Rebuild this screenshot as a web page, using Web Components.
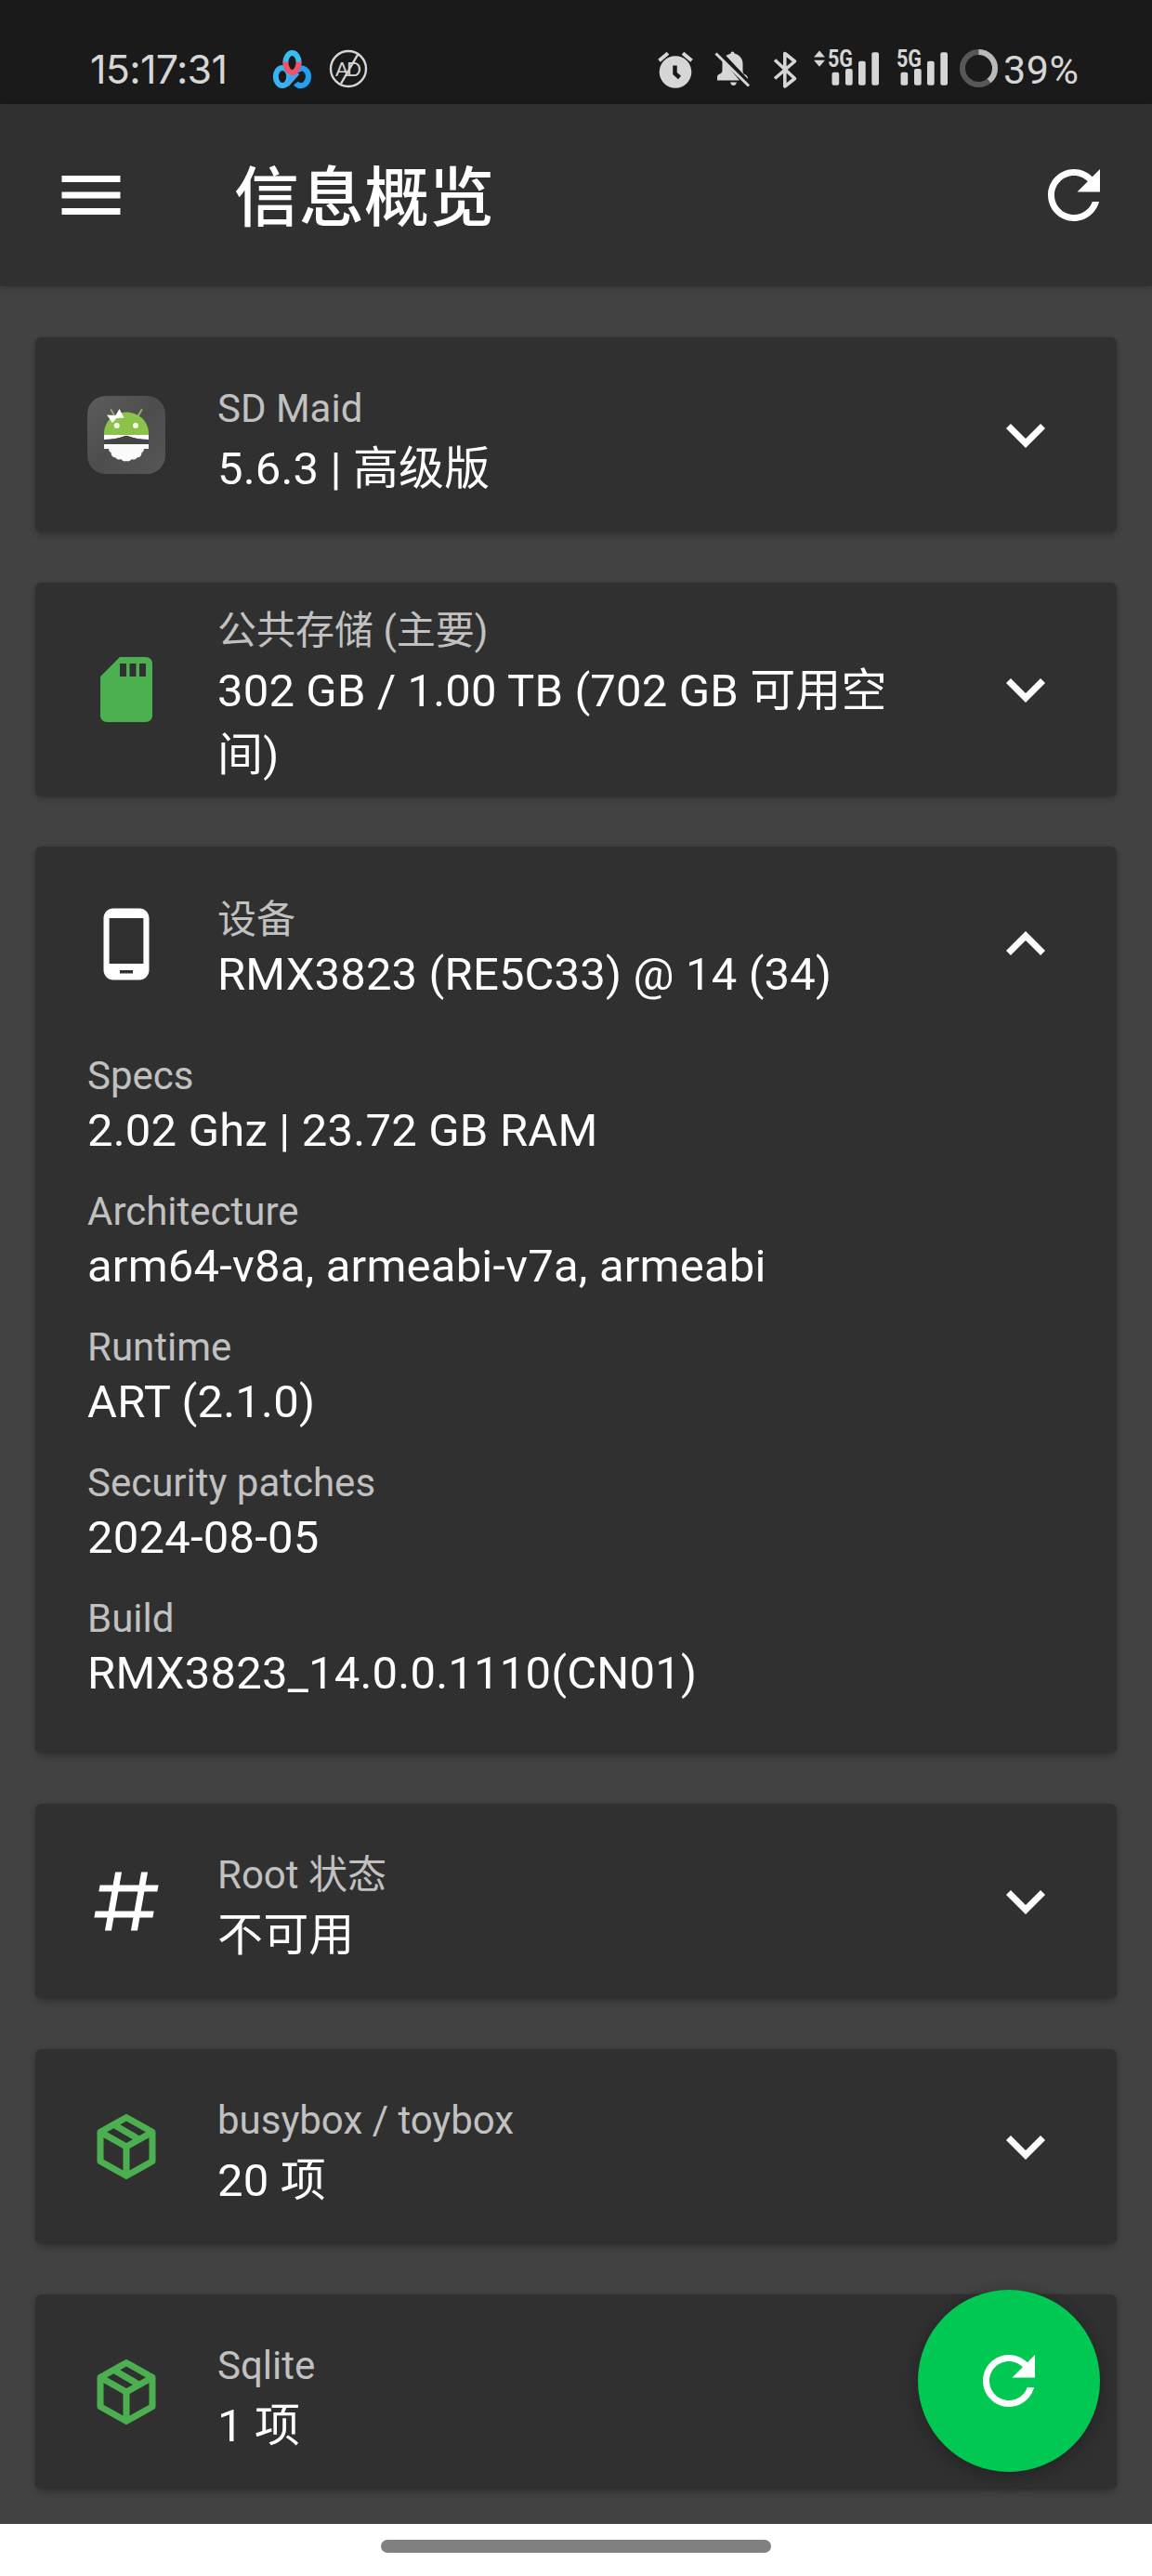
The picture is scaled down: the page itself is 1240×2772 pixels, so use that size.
<!DOCTYPE html>
<html lang="zh-CN">
<head>
<meta charset="utf-8">
<title>信息概览</title>
<style>
  body {
    margin: 0;
    background: #424242;
    color: #fff;
    font-family: Roboto, "Noto Sans CJK SC", sans-serif;
  }
</style>
</head>
<body>
<overview-screen>
  <status-bar slot="status" time="15:17:31" battery="39"></status-bar>
  <app-bar slot="bar">信息概览</app-bar>

  <info-card icon="maid">
    <span slot="label">SD Maid</span>
    <span slot="value">5.6.3 | 高级版</span>
  </info-card>
  <info-card icon="sdcard" tall>
    <span slot="label">公共存储 (主要)</span>
    <span slot="value">302 GB / 1.00 TB (702 GB 可用空间)</span>
  </info-card>
  <info-card icon="phone" open>
    <span slot="label">设备</span>
    <span slot="value">RMX3823 (RE5C33) @ 14 (34)</span>
    <info-detail label="Specs">2.02 Ghz | 23.72 GB RAM</info-detail>
    <info-detail label="Architecture">arm64-v8a, armeabi-v7a, armeabi</info-detail>
    <info-detail label="Runtime">ART (2.1.0)</info-detail>
    <info-detail label="Security patches">2024-08-05</info-detail>
    <info-detail label="Build">RMX3823_14.0.0.1110(CN01)</info-detail>
  </info-card>
  <info-card icon="pound">
    <span slot="label">Root 状态</span>
    <span slot="value">不可用</span>
  </info-card>
  <info-card icon="package">
    <span slot="label">busybox / toybox</span>
    <span slot="value">20 项</span>
  </info-card>
  <info-card icon="package">
    <span slot="label">Sqlite</span>
    <span slot="value">1 项</span>
  </info-card>

  <refresh-fab slot="fab"></refresh-fab>
</overview-screen>

<script>
// icons on a 24 unit grid
const GLYPHS = {
  menu: 'M3 18h18v-2H3v2zm0-5h18v-2H3v2zm0-7v2h18V6H3z',
  refresh: 'M17.65 6.35C16.2 4.9 14.21 4 12 4c-4.42 0-7.99 3.58-7.99 8s3.57 8 7.99 8c3.73 0 6.84-2.55 7.73-6h-2.08c-.82 2.33-3.04 4-5.65 4-3.31 0-6-2.69-6-6s2.69-6 6-6c1.66 0 3.14.69 4.22 1.78L13 11h7V4l-2.35 2.35z',
  more: 'M7.41 8.59L12 13.17l4.59-4.58L18 10l-6 6-6-6 1.41-1.41z',
  less: 'M12 8l-6 6 1.41 1.41L12 10.83l4.59 4.58L18 14z',
  sdcard: 'M18 2h-8L4.02 8 4 20c0 1.1.9 2 2 2h12c1.1 0 2-.9 2-2V4c0-1.1-.9-2-2-2zm-6 6h-2V4h2v4zm3 0h-2V4h2v4zm3 0h-2V4h2v4z',
  phone: 'M16 1H8C6.34 1 5 2.34 5 4v16c0 1.66 1.34 3 3 3h8c1.66 0 3-1.34 3-3V4c0-1.66-1.34-3-3-3zm-2 20h-4v-1h4v1zm3.25-3H6.75V4h10.5v14z',
  pound: 'M5.41 21L6.12 17H2.12L2.47 15H6.47L7.53 9H3.53L3.88 7H7.88L8.59 3H10.59L9.88 7H15.88L16.59 3H18.59L17.88 7H21.88L21.53 9H17.53L16.47 15H20.47L20.12 17H16.12L15.41 21H13.41L14.12 17H8.12L7.41 21H5.41M9.53 9L8.47 15H14.47L15.53 9H9.53Z',
  package: 'M21,16.5C21,16.88 20.79,17.21 20.47,17.38L12.57,21.82C12.41,21.94 12.21,22 12,22C11.79,22 11.59,21.94 11.43,21.82L3.53,17.38C3.21,17.21 3,16.88 3,16.5V7.5C3,7.12 3.21,6.79 3.53,6.62L11.43,2.18C11.59,2.06 11.79,2 12,2C12.21,2 12.41,2.06 12.57,2.18L20.47,6.62C20.79,6.79 21,7.12 21,7.5V16.5M12,4.15L10.11,5.22L16,8.61L17.96,7.5L12,4.15M6.04,7.5L12,10.85L13.96,9.75L8.08,6.35L6.04,7.5M5,15.91L11,19.29V12.58L5,9.21V15.91M19,15.91V9.21L13,12.58V19.29L19,15.91Z'
};

// launcher icon, 84 unit grid
const MAID = `
  <svg viewBox="0 0 84 84">
    <defs>
      <linearGradient id="bg" x1="0" y1="0" x2="1" y2="1">
        <stop offset="0" stop-color="#5c5c5c"/>
        <stop offset=".5" stop-color="#4d4d4d"/>
        <stop offset="1" stop-color="#565656"/>
      </linearGradient>
    </defs>
    <rect width="84" height="84" rx="20" fill="url(#bg)"/>
    <path d="M25.500 15l3 5M58.500 15l-3.500 6" stroke="#8fae66" stroke-width="2" stroke-linecap="round"/>
    <path d="M18 42v-2a24 22.500 0 0 1 48 0v2z" fill="#8bc34a"/>
    <circle cx="31.700" cy="32" r="3" fill="#f1f8e9"/>
    <circle cx="52" cy="32" r="3" fill="#f1f8e9"/>
    <path d="M18 42h48v5q-13 0-24-4.200q-11 4.200-24 4.200z" fill="#fff"/>
    <path d="M18 47q13 0 24-4.200q11 4.200 24 4.200v5H18z" fill="#444"/>
    <path d="M18 52h48v5h-5q0 3-2.500 4q0 5-5 5.500q-2 3-5.500 1.500q-3 3.500-6 2q-3 1.500-6-2q-3.500 1.500-5.500-1.500q-5-.5-5-5.500q-2.500-1-2.500-4h-5z" fill="#fafafa"/>
    <path d="M21 20.500l9.500 .5l4-7l5 9.500l-8 .5l-4.500 5z" fill="#fff"/>
  </svg>`;

function glyph(name) {
  return `<svg viewBox="0 0 24 24"><path fill="currentColor" d="${GLYPHS[name]}"/></svg>`;
}

// page frame: bars, scrolling list of cards, floating button, gesture area
class OverviewScreen extends HTMLElement {
  constructor() {
    super();
    this.attachShadow({ mode: 'open' }).innerHTML = `
      <style>
        :host {
          position: relative;
          display: flex;
          flex-direction: column;
          height: 2772px;
          overflow: hidden;
        }
        main {
          flex: 1;
          min-height: 0;
          display: flex;
          flex-direction: column;
          gap: 54px;
          padding: 55px 38px 0;
        }
        footer {
          display: flex;
          justify-content: center;
          height: 39px;
          padding-top: 17px;
          background: #fff;
        }
        footer i {
          width: 420px;
          height: 14px;
          border-radius: 7px;
          background: #808080;
        }
        slot[name=fab]::slotted(*) {
          position: absolute;
          right: 56px;
          bottom: 112px;
        }
      </style>
      <slot name="status"></slot>
      <slot name="bar"></slot>
      <main><slot></slot></main>
      <footer><i></i></footer>
      <slot name="fab"></slot>
    `;
  }
}

class StatusBar extends HTMLElement {
  connectedCallback() {
    const level = parseInt(this.getAttribute('battery'));
    this.attachShadow({ mode: 'open' }).innerHTML = `
      <style>
        :host {
          display: flex;
          align-items: flex-start;
          flex: none;
          box-sizing: border-box;
          height: 112px;
          padding: 50px 78px 0 97px;
          background: #1a1a1a;
          color: #d6d6d6;
        }
        svg, signal-bars {
          flex: none;
          height: 48px;
        }
        .time {
          width: 193px;
          font: 43px/49px Inter, sans-serif;
          letter-spacing: -.7px;
        }
        .right {
          display: flex;
          margin-left: auto;
        }
        .level {
          width: 82px;
          font: 43px/50px Roboto, sans-serif;
          letter-spacing: .6px;
        }
      </style>
      <span class="time">${this.getAttribute('time')}</span>
      <svg width="50" viewBox="0 0 50 48" fill="none" stroke-width="6">
        <ellipse cx="14" cy="32.500" rx="7.200" ry="9.500" stroke="#35b6f2"/>
        <path d="M28.500 39.500c2.500 3.500 7 3.500 10 1c5-4.500 4.500-13-.5-16c-3.500-2-6-1-8.500 2" stroke="#1ea2f5"/>
        <path d="M18.500 41L30 28" stroke="#42a5ee"/>
        <path d="M17.300 17.500a7.200 10.500 0 1 1 14.400 0" stroke="#38bdf3"/>
        <path d="M17.300 16.500c0 7 4 11.500 7.200 11.500s7.200-4.500 7.200-11.500" stroke="#f4516c"/>
      </svg>
      <svg width="44" viewBox="0 0 44 48" style="margin-left:13px">
        <circle cx="22" cy="24" r="19" fill="none" stroke="currentColor" stroke-width="2.400"/>
        <text x="22" y="31.500" text-anchor="middle" textLength="28" fill="currentColor" font-family="Lato" font-size="21">AD</text>
        <path d="M14 40L32.500 8" stroke="currentColor" stroke-width="2.400"/>
      </svg>
      <div class="right">
        <svg width="40" viewBox="0 0 40 48">
          <circle cx="20" cy="27.500" r="17.300" fill="currentColor"/>
          <path d="M2.500 15.200l9.500-8M28 7.200l9.500 8" stroke="currentColor" stroke-width="4"/>
          <path d="M19.500 20.500v8.500l5 4.500" fill="none" stroke="#1a1a1a" stroke-width="4.500"/>
        </svg>
        <svg width="44" viewBox="0 0 44 48" style="margin-left:20px">
          <path fill="currentColor" d="M10.500 14L29 36.500H5v-3.500c0-2 1-3 3-3.500c2-1 2.500-2 2.500-4.500zM14.500 10c2-1.500 4-2 5-2.500q0-2 2-2t2 2c5.500 1.500 9 5.500 9 11v7q0 4 2 4.500q3.500 1 3.500 5zM19 38.500h7q-1 3.500-3.500 3.500t-3.500-3.500z"/>
          <path d="M3.500 7.500l35.500 35" stroke="currentColor" stroke-width="3"/>
        </svg>
        <svg width="30" viewBox="0 0 30 48" style="margin-left:19px">
          <path d="M4 14.500L25.500 34.500L14.800 43V7.500L25.500 16L4 34.500" fill="none" stroke="currentColor" stroke-width="3.600" stroke-linejoin="round"/>
        </svg>
        <svg width="14" viewBox="0 0 14 48" style="margin:0 2px 0 15px">
          <path d="M7 4.500l6 7H1zM7 21.700l6-7H1z" fill="currentColor"/>
        </svg>
        <signal-bars></signal-bars>
        <signal-bars style="margin-left:18px"></signal-bars>
        <svg width="44" viewBox="0 0 44 48" style="margin-left:11px" fill="none" stroke-width="6">
          <circle cx="21.500" cy="23.500" r="17.500" stroke="#575757"/>
          <circle cx="21.500" cy="23.500" r="17.500" stroke="#b9b9b9" pathLength="100"
            stroke-dasharray="${level} 100" transform="rotate(-90 21.500 23.500)"/>
        </svg>
        <span class="level" style="margin-left:4px">${level}%</span>
      </div>
    `;
  }
}

class SignalBars extends HTMLElement {
  constructor() {
    super();
    this.attachShadow({ mode: 'open' }).innerHTML = `
      <style>
        :host { display: block; width: 56px; }
        svg { display: block; }
      </style>
      <svg width="56" height="48" viewBox="0 0 56 48" fill="currentColor">
        <text x="0" y="22" textLength="27" lengthAdjust="spacingAndGlyphs"
          font-family="Roboto" font-weight="700" font-size="25">5G</text>
        <rect x="4.500" y="27.700" width="7.700" height="14" rx="2"/>
        <rect x="19" y="24" width="7.700" height="17.700" rx="2"/>
        <rect x="33" y="15.700" width="7.700" height="26" rx="2"/>
        <rect x="47.300" y="6.300" width="7.700" height="35.400" rx="2"/>
      </svg>
    `;
  }
}

class AppBar extends HTMLElement {
  constructor() {
    super();
    this.attachShadow({ mode: 'open' }).innerHTML = `
      <style>
        :host {
          display: flex;
          align-items: center;
          flex: none;
          box-sizing: border-box;
          height: 196px;
          padding: 0 42px 0 56px;
          background: #303030;
          box-shadow: 0 2px 8px rgba(0, 0, 0, .2);
        }
        svg { width: 84px; height: 84px; }
        h1 {
          flex: 1;
          margin: 0 0 0 112px;
          padding-top: 7px;
          font-size: 70px;
          font-weight: 500;
          line-height: 84px;
        }
      </style>
      ${glyph('menu')}
      <h1><slot></slot></h1>
      ${glyph('refresh')}
    `;
  }
}

class InfoCard extends HTMLElement {
  connectedCallback() {
    const icon = this.getAttribute('icon');
    this.attachShadow({ mode: 'open' }).innerHTML = `
      <style>
        :host {
          display: block;
          flex: none;
          border-radius: 7px;
          background: #303030;
          box-shadow: 0 3px 7px rgba(0, 0, 0, .2), 0 0 3px rgba(0, 0, 0, .12);
        }
        header {
          display: flex;
          align-items: center;
          box-sizing: border-box;
          height: 210px;
          padding: 0 56px;
        }
        :host([tall]) header { height: 230px; }
        svg {
          flex: none;
          display: block;
          width: 84px;
          height: 84px;
        }
        .lead { color: ${icon === 'sdcard' || icon === 'package' ? '#4caf50' : '#fff'}; }
        .text {
          align-self: flex-start;
          flex: 1;
          padding: 52px 70px 0 56px;
        }
        :host([tall]) .text { padding-top: 27px; }
        :host([open]) .text { padding-top: 54px; }
        .label {
          color: #c1c1c1;
          font-size: 42px;
          line-height: 50px;
        }
        .value {
          margin-top: 5px;
          font-size: 49px;
          line-height: 69px;
          letter-spacing: .15px;
        }
        :host([open]) .value { margin-top: -1px; }
        .details {
          display: grid;
          gap: 30px;
          padding: 12px 56px 54px;
        }
        :host(:not([open])) .details { display: none; }
      </style>
      <header>
        <div class="lead">${icon === 'maid' ? MAID : glyph(icon)}</div>
        <div class="text">
          <div class="label"><slot name="label"></slot></div>
          <div class="value"><slot name="value"></slot></div>
        </div>
        ${glyph(this.hasAttribute('open') ? 'less' : 'more')}
      </header>
      <div class="details"><slot></slot></div>
    `;
  }
}

class InfoDetail extends HTMLElement {
  connectedCallback() {
    this.attachShadow({ mode: 'open' }).innerHTML = `
      <style>
        :host {
          display: block;
          height: 116px;
          font-size: 49px;
          line-height: 68px;
          letter-spacing: .2px;
        }
        .label {
          color: #c1c1c1;
          font-size: 42px;
          line-height: 50px;
          letter-spacing: 0;
        }
      </style>
      <div class="label">${this.getAttribute('label')}</div>
      <slot></slot>
    `;
  }
}

class RefreshFab extends HTMLElement {
  constructor() {
    super();
    this.attachShadow({ mode: 'open' }).innerHTML = `
      <style>
        :host {
          display: grid;
          place-items: center;
          width: 196px;
          height: 196px;
          border-radius: 50%;
          background: #00c853;
          box-shadow: 0 6px 18px rgba(0, 0, 0, .2), 0 0 14px rgba(0, 0, 0, .1);
        }
        svg { width: 84px; height: 84px; }
      </style>
      ${glyph('refresh')}
    `;
  }
}

customElements.define('signal-bars', SignalBars);
customElements.define('status-bar', StatusBar);
customElements.define('app-bar', AppBar);
customElements.define('info-detail', InfoDetail);
customElements.define('info-card', InfoCard);
customElements.define('refresh-fab', RefreshFab);
customElements.define('overview-screen', OverviewScreen);
</script>
</body>
</html>
